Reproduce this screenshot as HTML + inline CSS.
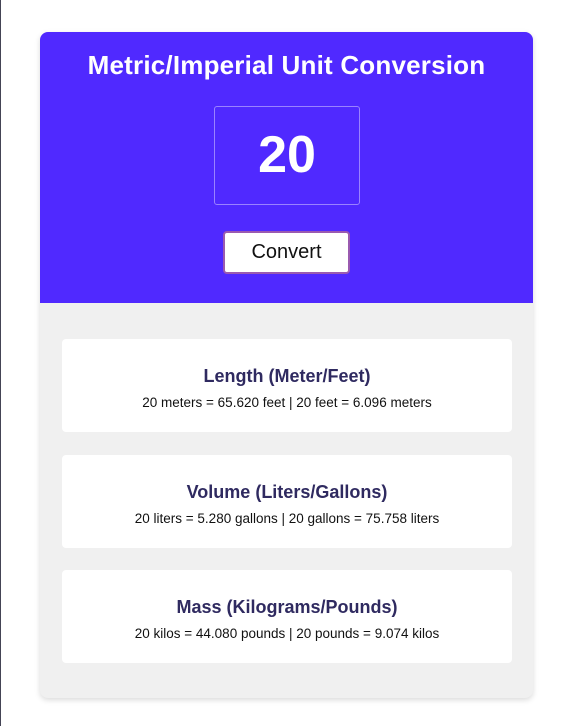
<!DOCTYPE html>
<html><head><style>
body{margin:0;background:#fff;width:573px;height:726px;overflow:hidden;font-family:"Liberation Sans",sans-serif;position:relative}
.edge{position:absolute;left:0;top:0;width:1px;height:726px;background:#445}
.card{position:absolute;left:40px;top:32px;width:493px;height:666px;border-radius:8px;background:#f0f0f0;box-shadow:0 2px 6px rgba(0,0,0,.15);overflow:hidden}
.head{height:271px;background:#5029ff;position:relative}
h1{margin:0;position:absolute;top:18px;width:100%;text-align:center;color:#fff;font-size:26px;font-weight:bold;letter-spacing:0.2px}
.inp{position:absolute;left:174px;top:74px;width:146px;height:99px;border:1.5px solid #9a82ff;border-radius:3px;box-sizing:border-box;color:#fff;font-size:52px;font-weight:bold;text-align:center;line-height:97px}
.btn{position:absolute;left:183px;top:199px;width:127px;height:43px;box-sizing:border-box;background:#fff;border:2px solid #9a5ab0;border-radius:4px;font-size:20px;text-align:center;line-height:39px;color:#111}
.box{position:absolute;left:22px;width:450px;height:93px;background:#fff;border-radius:4px;text-align:center}
.box h2{margin:27px 0 0;font-size:18px;font-weight:bold;color:#2f2a60;line-height:20px}
.box p{margin:9px 0 0;font-size:13.5px;color:#111;line-height:16px}
</style></head><body>
<div class="edge"></div>
<div class="card">
<div class="head"><h1>Metric/Imperial Unit Conversion</h1><div class="inp">20</div><div class="btn">Convert</div></div>
<div class="box" style="top:307px"><h2>Length (Meter/Feet)</h2><p>20 meters = 65.620 feet | 20 feet = 6.096 meters</p></div>
<div class="box" style="top:423px"><h2>Volume (Liters/Gallons)</h2><p>20 liters = 5.280 gallons | 20 gallons = 75.758 liters</p></div>
<div class="box" style="top:538px"><h2>Mass (Kilograms/Pounds)</h2><p>20 kilos = 44.080 pounds | 20 pounds = 9.074 kilos</p></div>
</div>
</body></html>
